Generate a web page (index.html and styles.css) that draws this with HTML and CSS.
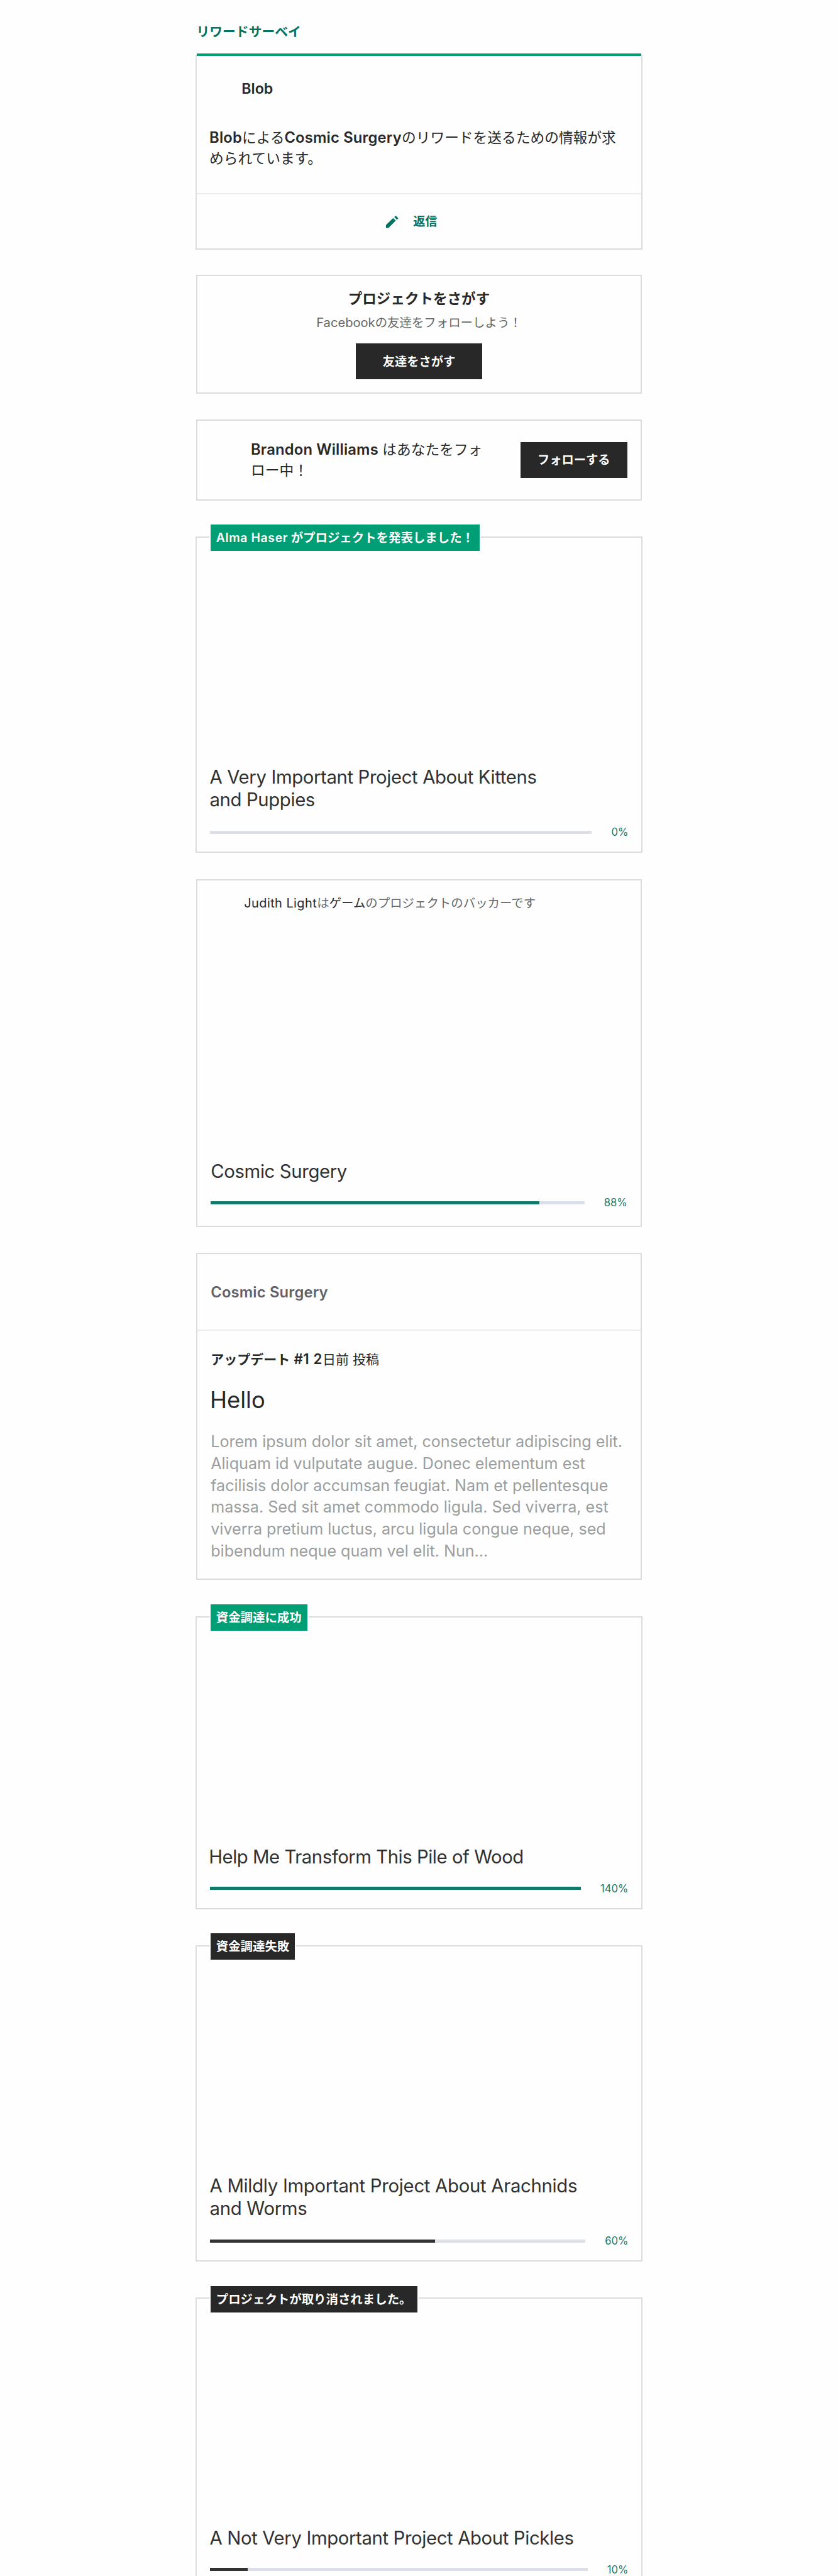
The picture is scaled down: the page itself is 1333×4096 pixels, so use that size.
FILE: index.html
```html
<!DOCTYPE html>
<html lang="ja">
<head>
<meta charset="utf-8">
<title>アクティビティ</title>
<link rel="stylesheet" href="styles.css">
</head>
<body>
<main class="feed">
  <h1 class="section-title">リワードサーベイ</h1>

  <article class="card wide survey">
    <div class="creator">Blob</div>
    <p class="survey-text"><b>Blob</b>による<b>Cosmic Surgery</b>のリワードを送るための情報が求<br>められています。</p>
    <div class="respond">
      <svg class="pencil" viewBox="0 0 22 22"><path d="M0 22V16.7L12.8 4.3 17.6 8.8 4.5 22zM14.9 2.4L16.8.4Q17.4-.1 17.9.4L21.7 4.2Q22.2 4.7 21.7 5.3L19.6 7.1z" fill="currentColor"/></svg>
      <span class="respond-label">返信</span>
    </div>
  </article>

  <article class="card find">
    <h2 class="find-title">プロジェクトをさがす</h2>
    <p class="find-sub"><span class="latin">Facebook</span>の友達をフォローしよう！</p>
    <a class="btn btn-find">友達をさがす</a>
  </article>

  <article class="card follow">
    <p class="follow-text"><b>Brandon Williams</b> はあなたをフォ<br>ロー中！</p>
    <a class="btn btn-follow">フォローする</a>
  </article>

  <article class="card wide project launch">
    <div class="tag green"><p><span class="latin">Alma Haser</span> がプロジェクトを発表しました！</p></div>
    <h2 class="title">A Very Important Project About Kittens<br>and Puppies</h2>
    <div class="progress"><div class="track"><div class="fill" style="width:0%"></div></div><span class="pct">0%</span></div>
  </article>

  <article class="card project backed">
    <p class="backing"><strong class="latin">Judith Light</strong>は<strong>ゲーム</strong>のプロジェクトのバッカーです</p>
    <h2 class="title">Cosmic Surgery</h2>
    <div class="progress"><div class="track"><div class="fill" style="width:88%"></div></div><span class="pct">88%</span></div>
  </article>

  <article class="card update">
    <div class="update-project">Cosmic Surgery</div>
    <p class="update-meta"><b>アップデート<span class="latin"> #1 2</span></b>日前 投稿</p>
    <h2 class="update-title">Hello</h2>
    <p class="update-body">Lorem ipsum dolor sit amet, consectetur adipiscing elit.<br>Aliquam id vulputate augue. Donec elementum est<br>facilisis dolor accumsan feugiat. Nam et pellentesque<br>massa. Sed sit amet commodo ligula. Sed viverra, est<br>viverra pretium luctus, arcu ligula congue neque, sed<br>bibendum neque quam vel elit. Nun...</p>
  </article>

  <article class="card wide project success">
    <div class="tag green">資金調達に成功</div>
    <h2 class="title">Help Me Transform This Pile of Wood</h2>
    <div class="progress"><div class="track"><div class="fill" style="width:100%"></div></div><span class="pct">140%</span></div>
  </article>

  <article class="card wide project failure">
    <div class="tag dark">資金調達失敗</div>
    <h2 class="title">A Mildly Important Project About Arachnids<br>and Worms</h2>
    <div class="progress"><div class="track"><div class="fill black" style="width:60%"></div></div><span class="pct">60%</span></div>
  </article>

  <article class="card wide project canceled">
    <div class="tag dark">プロジェクトが取り消されました。</div>
    <h2 class="title">A Not Very Important Project About Pickles</h2>
    <div class="progress"><div class="track"><div class="fill black" style="width:10%"></div></div><span class="pct">10%</span></div>
  </article>
</main>
</body>
</html>
```
FILE: styles.css
```css
html { font-size: 8.6784px; background: #fefefe; }
* { box-sizing: border-box; margin: 0; }
body {
  color: #282828;
  font-family: Inter, "Noto Sans CJK JP", sans-serif;
  height: 472rem;
  overflow: hidden;
}
.feed { width: 82rem; margin-left: 35.8rem; display: flex; flex-direction: column; }

.section-title { margin: 4.4rem 0 0 0.2rem; height: 5.6rem; font-size: 2.4rem; line-height: 3rem; font-weight: 700; color: #037362; }

.card { position: relative; width: 81.6rem; margin-left: 0.2rem; border: 2px solid #dcdcdc; background: #fefefe; }
.card.wide { width: 82rem; margin-left: 0; }

/* survey */
.survey { height: 35.8rem; border-top: 0; padding-top: 0.2rem; }
.survey::before { content: ""; position: absolute; top: -0.2rem; left: 0; right: 0; height: 0.4rem; background: #009e74; }
.survey b, .follow-text b { font-weight: 600; font-size: 2.74rem; letter-spacing: 0.02rem; }
.creator { padding: 4.6rem 0 0 8.25rem; font-size: 2.68rem; line-height: 3rem; font-weight: 600; height: 13.2rem; }
.survey-text { padding-left: 2.35rem; height: 12rem; font-size: 2.62rem; line-height: 3.8rem; white-space: nowrap; }
.respond { border-top: 2px solid #ebebf2; height: 10.2rem; display: flex; align-items: center; justify-content: center; gap: 2.7rem; padding-right: 2.7rem; font-size: 2.2rem; font-weight: 700; color: #037362; }
.respond-label { padding-bottom: 0.35rem; }
.pencil { width: 2.25rem; height: 2.25rem; overflow: visible; }

/* find friends */
.find { margin-top: 4.6rem; height: 21.7rem; display: flex; flex-direction: column; align-items: center; }
.find-title { margin-top: 2.4rem; font-size: 2.6rem; line-height: 3.4rem; font-weight: 700; }
.find-sub { margin-top: 1.2rem; font-size: 2.24rem; line-height: 3rem; height: 3rem; color: #656868; white-space: nowrap; }
.find-sub .latin { font-size: 2.32rem; }
.btn { display: flex; align-items: center; justify-content: center; padding-bottom: 0.25rem; background: #282828; color: #fff; font-weight: 700; font-size: 2.22rem; height: 6.6rem; }
.btn-find { width: 23.2rem; margin-top: 2.3rem; }

/* follow */
.follow { margin-top: 4.8rem; height: 14.8rem; display: flex; align-items: center; justify-content: space-between; padding: 0 2.4rem 0 9.75rem; }
.follow-text { padding-top: 0.2rem; font-size: 2.62rem; line-height: 3.8rem; white-space: nowrap; }
.btn-follow { width: 19.6rem; }

/* project cards */
.project { display: flex; flex-direction: column; justify-content: flex-end; padding: 0 2.4rem 2.25rem 2.4rem; }
.tag { position: absolute; left: 2.35rem; top: -2.6rem; height: 5.3rem; display: flex; align-items: center; padding: 0 1.05rem 0.35rem 1rem; border: 2px solid #fefefe; color: #fff; font-size: 2.24rem; font-weight: 700; white-space: nowrap; }
.tag .latin { letter-spacing: 0.07rem; font-weight: 600; }
.green { background: #009e74; }
.dark { background: #282828; }
.title { font-size: 3.38rem; line-height: 4.16rem; font-weight: 400; letter-spacing: -0.044rem; color: #313131; white-space: nowrap; }
.progress { display: flex; align-items: center; justify-content: space-between; gap: 3.6rem; margin-top: 2.5rem; height: 2.6rem; }
.track { flex: 1; height: 0.6rem; background: #dcdee9; }
.fill { height: 100%; background: #127a6a; }
.black { background: #313131; }
.pct { font-size: 1.92rem; line-height: 2.6rem; color: #127a6a; }

.launch { margin-top: 6.6rem; height: 58rem; }

.backed { margin-top: 4.8rem; height: 63.7rem; padding-bottom: 2.9rem; }
.backed .progress { margin-top: 2.3rem; }
.backing { margin: 2.65rem auto auto 6.1rem; font-size: 2.24rem; line-height: 3.2rem; color: #656868; white-space: nowrap; }
.backing strong { color: #282828; font-weight: 400; }
.backing .latin { font-size: 2.3rem; letter-spacing: 0.05rem; }

/* project update */
.update { margin-top: 4.8rem; height: 59.9rem; padding-left: 2.4rem; }
.update-project { height: 14rem; margin-left: -2.4rem; padding: 5.4rem 0 0 2.4rem; font-size: 2.74rem; line-height: 3.2rem; font-weight: 600; letter-spacing: 0.02rem; color: #62626a; border-bottom: 2px solid #ebebf2; }
.update-meta { padding-top: 3.55rem; height: 6.9rem; font-size: 2.42rem; line-height: 3.2rem; }
.update-meta .latin { font-size: 2.56rem; letter-spacing: 0.07rem; white-space: pre; }
.update-meta b { font-weight: 600; }
.update-title { padding-top: 3.1rem; margin-left: -0.15rem; font-size: 4.2rem; line-height: 5.4rem; font-weight: 400; }
.update-body { padding-top: 2.95rem; font-size: 2.9rem; line-height: 4rem; letter-spacing: -0.004rem; color: #9b9e9e; white-space: nowrap; }

.success { margin-top: 6.6rem; height: 53.7rem; }
.success .title { margin-left: -0.15rem; letter-spacing: -0.055rem; }
.success .progress, .canceled .progress { margin-top: 2.35rem; }
.failure { margin-top: 6.6rem; height: 58rem; }
.failure .title { letter-spacing: -0.035rem; }
.canceled { margin-top: 6.6rem; height: 53.6rem; }
```
